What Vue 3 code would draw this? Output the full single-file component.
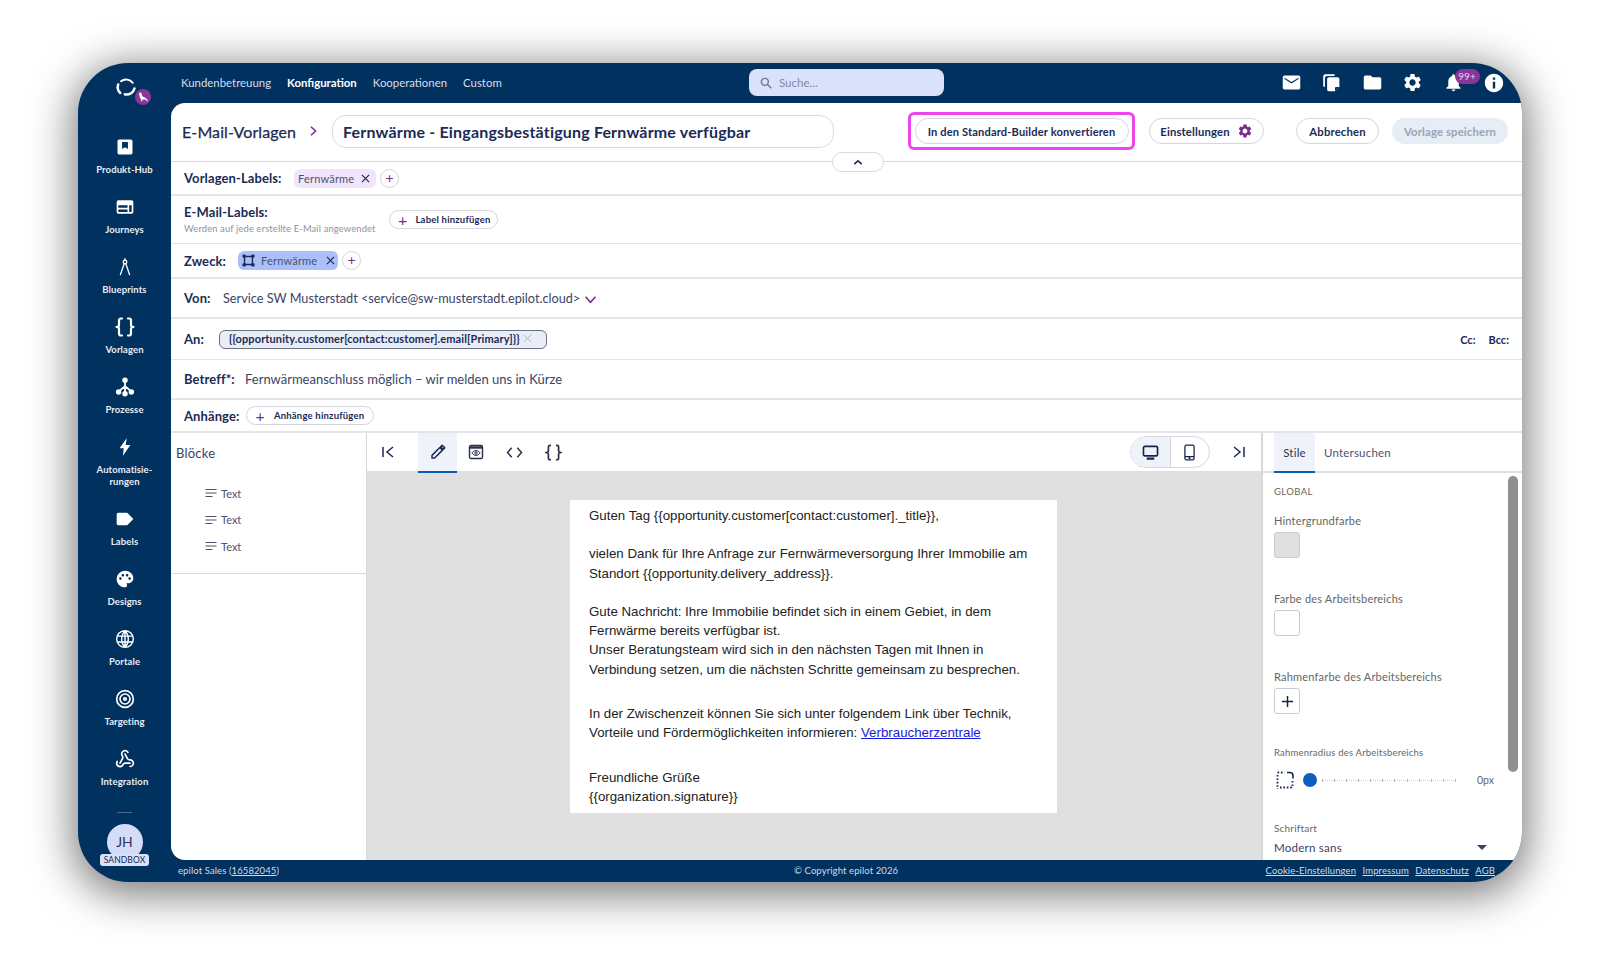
<script setup>
// sidebar entries: d is a single path, stroke = outline style icon
const sideItems = [
  { label: 'Produkt-Hub', d: 'M5 3h14a2 2 0 0 1 2 2v14a2 2 0 0 1-2 2H5a2 2 0 0 1-2-2V5a2 2 0 0 1 2-2zm3.5 3v8.500l3.500-2.200 3.500 2.200V6z' },
  { label: 'Journeys', d: 'M4 4h16a2 2 0 0 1 2 2v12a2 2 0 0 1-2 2H4a2 2 0 0 1-2-2V6a2 2 0 0 1 2-2zm0 6v3h11v-3zm0 5v3h11v-3zm13-5v8h3v-8z' },
  { label: 'Blueprints', stroke: true, sw: 1.7, vb: '-1 -1 26 26', d: 'M12 1v2M9.700 5.500a2.300 2.300 0 1 0 4.600 0a2.300 2.300 0 1 0-4.600 0zM10.800 8L6 22M13.200 8L18 22' },
  { label: 'Vorlagen', stroke: true, sw: 2.2, vb: '2 2 20 20', d: 'M9 3.500H8a2 2 0 0 0-2 2V10a2 2 0 0 1-2.500 2A2 2 0 0 1 6 14v4.500a2 2 0 0 0 2 2h1M15 3.500h1a2 2 0 0 1 2 2V10a2 2 0 0 0 2.500 2a2 2 0 0 0-2.500 2v4.500a2 2 0 0 1-2 2h-1' },
  { label: 'Prozesse', stroke: true, fill: true, vb: '1 1 22 22', d: 'M12 5v14M12 11L5 17M12 11l7 6M10 4.500a2 2 0 1 0 4 0a2 2 0 1 0-4 0zM10 19.500a2 2 0 1 0 4 0a2 2 0 1 0-4 0zM3 17.500a2 2 0 1 0 4 0a2 2 0 1 0-4 0zM17 17.500a2 2 0 1 0 4 0a2 2 0 1 0-4 0z' },
  { label: 'Automatisie-\nrungen', d: 'M14 1.500L5.500 13.500h5L9.500 22.500l9-13h-5.500z' },
  { label: 'Labels', d: 'M15.630 5.300C15.270 4.800 14.670 4.500 14 4.500H4C2.900 4.500 2 5.400 2 6.500v11c0 1.100.9 2 2 2h10c.67 0 1.270-.33 1.630-.84L22 12z' },
  { label: 'Designs', d: 'M12 2C6.490 2 2 6.490 2 12s4.490 10 10 10c1.380 0 2.500-1.120 2.500-2.500 0-.61-.23-1.200-.64-1.670-.08-.1-.13-.21-.13-.33 0-.28.22-.5.5-.5H16c3.310 0 6-2.690 6-6 0-4.960-4.490-9-10-9zm5.500 11c-.83 0-1.500-.67-1.500-1.500s.67-1.500 1.500-1.500 1.500.67 1.500 1.500-.67 1.500-1.500 1.500zm-3-4c-.83 0-1.500-.67-1.500-1.500S13.670 6 14.500 6s1.500.67 1.500 1.500S15.330 9 14.500 9zM5 11.500c0-.83.67-1.500 1.500-1.500S8 10.670 8 11.500 7.330 13 6.500 13 5 12.330 5 11.500zm6-4c0 .83-.67 1.500-1.500 1.500S8 8.330 8 7.500 8.670 6 9.500 6s1.500.67 1.500 1.500z' },
  { label: 'Portale', stroke: true, sw: 1.7, d: 'M2 12a10 10 0 1 0 20 0a10 10 0 1 0-20 0zM2.500 8.500h19M2.500 15.500h19M12 2c-5.300 5.600-5.300 14.400 0 20M12 2c5.300 5.600 5.300 14.400 0 20M12 2v20' },
  { label: 'Targeting', stroke: true, d: 'M2 12a10 10 0 1 0 20 0a10 10 0 1 0-20 0zM6 12a6 6 0 1 0 12 0a6 6 0 1 0-12 0zM10.500 12a1.500 1.500 0 1 0 3 0a1.500 1.500 0 1 0-3 0z' },
  { label: 'Integration', stroke: true, d: 'M18 16.980h-5.990c-1.100 0-1.950.94-2.480 1.900A4 4 0 0 1 2 17c.01-.7.2-1.400.57-2M6 17l3.130-5.780c.53-.97.1-2.180-.5-3.100a4 4 0 1 1 6.890-4.060M12 6l3.130 5.730C15.660 12.700 16.900 13 18 13a4 4 0 0 1 0 8' },
]

const gearPath = 'M19.140 12.940c.04-.3.06-.61.06-.94 0-.32-.02-.64-.07-.94l2.030-1.580c.18-.14.23-.41.12-.61l-1.920-3.320c-.12-.22-.37-.29-.59-.22l-2.390.96c-.5-.38-1.030-.7-1.620-.94l-.36-2.540c-.04-.24-.24-.41-.48-.41h-3.840c-.24 0-.43.17-.47.41l-.36 2.540c-.59.24-1.130.57-1.620.94l-2.390-.96c-.22-.08-.47 0-.59.22L2.740 8.870c-.12.21-.08.47.12.61l2.030 1.580c-.05.3-.09.63-.09.94s.02.64.07.94l-2.030 1.580c-.18.14-.23.41-.12.61l1.920 3.320c.12.22.37.29.59.22l2.390-.96c.5.38 1.030.7 1.620.94l.36 2.540c.05.24.24.41.48.41h3.840c.24 0 .44-.17.47-.41l.36-2.540c.59-.24 1.130-.56 1.620-.94l2.390.96c.22.08.47 0 .59-.22l1.920-3.320c.12-.22.07-.47-.12-.61l-2.010-1.580zM12 15.600c-1.980 0-3.600-1.620-3.600-3.600s1.620-3.600 3.600-3.600 3.600 1.620 3.600 3.600-1.620 3.600-3.600 3.600z'

const blocks = ['Text', 'Text', 'Text']
const sliderTicks = Array.from({ length: 12 })
</script>

<template>
  <div class="stage">
    <div class="frame">
      <div class="body">
        <aside class="sidebar">
          <div class="logo">
            <svg viewBox="0 0 24 24" width="24" height="24" fill="none" stroke="#fff" stroke-linecap="round">
              <path d="M8 6.300A8.500 8.500 0 0 1 19.800 7.800" stroke-width="1.900" />
              <path d="M21.500 13.500A8 8 0 0 1 11.800 19.300" stroke-width="2.500" />
              <path d="M7.300 18A8 8 0 0 1 5.200 9.500" stroke-width="2.500" />
            </svg>
            <span class="logo-badge">
              <svg viewBox="0 0 16 16" width="13" height="13" fill="#fff"><path d="M4 2.500a1.500 1.500 0 0 1 2.800.5l1 3.500L12 8.500l2.500 3v1h-1.200L12 10.500H8.500L7 13H5.800l1-2.200C5 10 3.800 5.500 4 2.500z" /></svg>
            </span>
          </div>
          <nav class="side-nav">
            <a v-for="item in sideItems" :key="item.label" class="side-item">
              <svg
                :viewBox="item.vb || '0 0 24 24'"
                width="20"
                height="20"
                fill-rule="evenodd"
                :fill="item.stroke && !item.fill ? 'none' : '#fff'"
                :stroke="item.stroke ? '#fff' : 'none'"
                :stroke-width="item.stroke ? (item.sw || 2) : 0"
                stroke-linecap="round"
                stroke-linejoin="round"
              ><path :d="item.d" /></svg>
              <span class="side-label">{{ item.label }}</span>
            </a>
          </nav>
          <div class="side-rule"></div>
          <div class="avatar">
            JH
            <span class="sandbox">SANDBOX</span>
          </div>
        </aside>

        <div class="main">
          <header class="topbar">
            <nav class="topnav">
              <a>Kundenbetreuung</a>
              <a class="on">Konfiguration</a>
              <a>Kooperationen</a>
              <a>Custom</a>
            </nav>
            <div class="search">
              <svg viewBox="0 0 24 24" width="14" height="14" fill="none" stroke="#6d7691" stroke-width="2.400"><circle cx="10" cy="10" r="6" /><path d="M15 15l6 6" /></svg>
              <span>Suche...</span>
            </div>
            <div class="top-icons">
              <svg viewBox="0 0 24 24" width="21" height="21" fill="#fff"><path d="M20 4H4c-1.100 0-2 .9-2 2v12c0 1.100.9 2 2 2h16c1.100 0 2-.9 2-2V6c0-1.100-.9-2-2-2zm0 4l-8 5-8-5V6.500l8 5 8-5z" fill-rule="evenodd" /></svg>
              <svg viewBox="0 0 24 24" width="21" height="21" fill="#fff"><path d="M9 6h10a2 2 0 0 1 2 2v9l-5 5H9a2 2 0 0 1-2-2V8a2 2 0 0 1 2-2zM5 2.500h10.500v2H7a2.500 2.500 0 0 0-2.500 2.500V17H4a1.500 1.500 0 0 1-1.500-1.500V5a2.500 2.500 0 0 1 2.500-2.500z" /><path d="M16 22v-4a1 1 0 0 1 1-1h4z" fill="#00315f" /></svg>
              <svg viewBox="0 0 24 24" width="21" height="21" fill="#fff"><path d="M10 4H4c-1.100 0-1.990.9-1.990 2L2 18c0 1.100.9 2 2 2h16c1.100 0 2-.9 2-2V8c0-1.100-.9-2-2-2h-8l-2-2z" /></svg>
              <svg viewBox="0 0 24 24" width="21" height="21" fill="#fff"><path :d="gearPath" fill-rule="evenodd" /></svg>
              <span class="bell">
                <svg viewBox="0 0 24 24" width="21" height="21" fill="#fff"><path d="M12 22c1.100 0 2-.9 2-2h-4c0 1.100.89 2 2 2zm6-6v-5c0-3.070-1.640-5.640-4.500-6.320V4c0-.83-.67-1.500-1.500-1.500s-1.500.67-1.500 1.500v.68C7.630 5.360 6 7.920 6 11v5l-2 2v1h16v-1l-2-2z" /></svg>
                <span class="bell-badge">99+</span>
              </span>
              <svg class="info" viewBox="0 0 24 24" width="22" height="22" fill="#fff"><path d="M12 2C6.480 2 2 6.480 2 12s4.480 10 10 10 10-4.480 10-10S17.520 2 12 2zm1.300 16h-2.600v-7.500h2.600zm0-9.500h-2.600V6h2.600z" fill-rule="evenodd" /></svg>
            </div>
          </header>

          <section class="panel">
            <div class="head">
              <span class="crumb">E-Mail-Vorlagen</span>
              <svg class="crumb-arrow" viewBox="0 0 10 14" width="9" height="12" fill="none" stroke="#7b2d8e" stroke-width="1.800"><path d="M2 2l5.500 5L2 12" /></svg>
              <div class="name">Fernwärme - Eingangsbestätigung Fernwärme verfügbar</div>
              <div class="highlight">
                <button class="btn">In den Standard-Builder konvertieren</button>
              </div>
              <button class="btn settings">
                Einstellungen
                <svg viewBox="0 0 24 24" width="16" height="16" fill="#7b2d8e"><path :d="gearPath" fill-rule="evenodd" /></svg>
              </button>
              <button class="btn cancel">Abbrechen</button>
              <button class="btn save">Vorlage speichern</button>
              <span class="collapse">
                <svg viewBox="0 0 12 8" width="10" height="7" fill="none" stroke="#1c2a55" stroke-width="1.800"><path d="M1.500 6L6 2l4.500 4" /></svg>
              </span>
            </div>

            <div class="row r-labels">
              <span class="lbl">Vorlagen-Labels:</span>
              <span class="chip lilac">Fernwärme
                <svg class="x" viewBox="0 0 10 10" width="9" height="9" stroke="#1c2a55" stroke-width="1.300"><path d="M1 1l8 8M9 1l-8 8" /></svg>
              </span>
              <span class="plus">+</span>
            </div>
            <div class="row r-mail">
              <div class="lbl-stack">
                <span class="lbl">E-Mail-Labels:</span>
                <small>Werden auf jede erstellte E-Mail angewendet</small>
              </div>
              <button class="add add-label"><b>+</b>Label hinzufügen</button>
            </div>
            <div class="row r-zweck">
              <span class="lbl">Zweck:</span>
              <span class="chip blue">
                <svg viewBox="0 0 14 14" width="13" height="13" fill="#1c2a55"><path d="M2 2h10v1.500H2zM2 10.500h10V12H2zM2 2h1.500v10H2zM10.500 2H12v10h-1.500z" /><rect x="0.500" y="0.500" width="3.500" height="3.500" rx="1" /><rect x="10" y="0.500" width="3.500" height="3.500" rx="1" /><rect x="0.500" y="10" width="3.500" height="3.500" rx="1" /><rect x="10" y="10" width="3.500" height="3.500" rx="1" /></svg>
                Fernwärme
                <svg class="x" viewBox="0 0 10 10" width="9" height="9" stroke="#1c2a55" stroke-width="1.300"><path d="M1 1l8 8M9 1l-8 8" /></svg>
              </span>
              <span class="plus">+</span>
            </div>
            <div class="row r-von">
              <span class="lbl">Von:</span>
              <span class="val">Service SW Musterstadt &lt;service@sw-musterstadt.epilot.cloud&gt;</span>
              <svg class="von-arrow" viewBox="0 0 14 10" width="13" height="9" fill="none" stroke="#7b2d8e" stroke-width="1.800"><path d="M1.500 2L7 8l5.500-6" /></svg>
            </div>
            <div class="row r-an">
              <span class="lbl">An:</span>
              <span class="token">{{ '{' }}{{ '{' }}opportunity.customer[contact:customer].email[Primary]{{ '}' }}{{ '}' }}
                <svg viewBox="0 0 10 10" width="9" height="9" stroke="#a9adba" stroke-width="1"><path d="M1 1l8 8M9 1l-8 8" /></svg>
              </span>
              <span class="cc cc-first">Cc:</span>
              <span class="cc">Bcc:</span>
            </div>
            <div class="row r-betreff">
              <span class="lbl">Betreff*:</span>
              <span class="val">Fernwärmeanschluss möglich – wir melden uns in Kürze</span>
            </div>
            <div class="row r-att">
              <span class="lbl">Anhänge:</span>
              <button class="add add-att"><b>+</b>Anhänge hinzufügen</button>
            </div>

            <div class="editor">
              <div class="blocks">
                <div class="blocks-top">
                  <h4>Blöcke</h4>
                  <ul>
                    <li v-for="(b, i) in blocks" :key="i">
                      <svg viewBox="0 0 12 10" width="12" height="10" stroke="#4a5270" stroke-width="1.100"><path d="M0.500 1.500h11M0.500 5h11M0.500 8.500h7" /></svg>
                      {{ b }}
                    </li>
                  </ul>
                </div>
              </div>

              <div class="center">
                <div class="toolbar">
                  <svg class="tool first" viewBox="0 0 16 16" width="16" height="16" fill="none" stroke="#1c2a55" stroke-width="1.500"><path d="M3 3v10M13 3L7 8l6 5" /></svg>
                  <span class="tool-on">
                    <svg viewBox="0 0 24 24" width="18" height="18" fill="none" stroke="#1c2a55" stroke-width="2" stroke-linejoin="round"><path d="M4 16.500V20h3.500L18 9.500 14.500 6zM15.500 5l2-2 3.500 3.500-2 2z" /></svg>
                  </span>
                  <span class="tool-cell">
                    <svg viewBox="0 0 16 16" width="16" height="16" fill="none" stroke="#2a2f45"><rect x="1.500" y="1.500" width="13" height="13" rx="1.500" stroke-width="1.400" /><path d="M1.500 3.500h13" stroke-width="2.400" /><path d="M3.800 9c2.600-3.200 5.800-3.200 8.400 0c-2.600 3.200-5.800 3.200-8.400 0z" /><circle cx="8" cy="9" r="1.200" /></svg>
                  </span>
                  <span class="tool-cell">
                    <svg viewBox="0 0 18 14" width="17" height="13" fill="none" stroke="#2a2f45" stroke-width="1.600"><path d="M6 2L1.500 7 6 12M12 2l4.500 5-4.500 5" /></svg>
                  </span>
                  <span class="tool-cell">
                    <svg viewBox="2 2 20 20" width="17" height="17" fill="none" stroke="#2a2f45" stroke-width="2"><path d="M9 3.500H8a2 2 0 0 0-2 2V10a2 2 0 0 1-2.500 2A2 2 0 0 1 6 14v4.500a2 2 0 0 0 2 2h1M15 3.500h1a2 2 0 0 1 2 2V10a2 2 0 0 0 2.500 2a2 2 0 0 0-2.500 2v4.500a2 2 0 0 1-2 2h-1" /></svg>
                  </span>
                  <div class="devices">
                    <span class="dev on">
                      <svg viewBox="0 0 18 16" width="17" height="15" fill="none" stroke="#14264f" stroke-width="1.800"><rect x="1.500" y="1.500" width="15" height="10" rx="1.500" /><path d="M5 14.500h8" stroke-width="2.400" /></svg>
                    </span>
                    <span class="dev">
                      <svg viewBox="0 0 12 18" width="11" height="17" fill="none" stroke="#14264f" stroke-width="1.400"><rect x="1" y="1" width="10" height="16" rx="1.800" /><path d="M1 13.500h10" /><circle cx="6" cy="15.200" r="0.500" /></svg>
                    </span>
                  </div>
                  <svg class="tool last" viewBox="0 0 16 16" width="16" height="16" fill="none" stroke="#1c2a55" stroke-width="1.500"><path d="M13 3v10M3 3l6 5-6 5" /></svg>
                </div>
                <div class="canvas">
                  <article class="mail">
                    <p>Guten Tag {{ '{' }}{{ '{' }}opportunity.customer[contact:customer]._title{{ '}' }}{{ '}' }},</p>
                    <p class="gap">vielen Dank für Ihre Anfrage zur Fernwärmeversorgung Ihrer Immobilie am<br>Standort {{ '{' }}{{ '{' }}opportunity.delivery_address{{ '}' }}{{ '}' }}.</p>
                    <p class="gap">Gute Nachricht: Ihre Immobilie befindet sich in einem Gebiet, in dem<br>Fernwärme bereits verfügbar ist.<br>Unser Beratungsteam wird sich in den nächsten Tagen mit Ihnen in<br>Verbindung setzen, um die nächsten Schritte gemeinsam zu besprechen.</p>
                    <p class="gap wide">In der Zwischenzeit können Sie sich unter folgendem Link über Technik,<br>Vorteile und Fördermöglichkeiten informieren: <a>Verbraucherzentrale</a></p>
                    <p class="gap wide">Freundliche Grüße<br>{{ '{' }}{{ '{' }}organization.signature{{ '}' }}{{ '}' }}</p>
                  </article>
                </div>
              </div>

              <aside class="props">
                <div class="tabs">
                  <span class="tab on">Stile</span>
                  <span class="tab">Untersuchen</span>
                </div>
                <div class="props-body">
                  <div class="scrollbar"></div>
                  <div class="global">GLOBAL</div>
                  <div class="prop-label first">Hintergrundfarbe</div>
                  <div class="swatch grey"></div>
                  <div class="prop-label">Farbe des Arbeitsbereichs</div>
                  <div class="swatch"></div>
                  <div class="prop-label">Rahmenfarbe des Arbeitsbereichs</div>
                  <div class="swatch add-swatch">
                    <svg viewBox="0 0 14 14" width="13" height="13" stroke="#14264f" stroke-width="1.600"><path d="M7 1v12M1 7h12" /></svg>
                  </div>
                  <div class="prop-label small">Rahmenradius des Arbeitsbereichs</div>
                  <div class="slider-row">
                    <svg class="radius-icon" viewBox="0 0 18 18" width="18" height="18" fill="none" stroke="#14264f"><path d="M11 1.500h3a3 3 0 0 1 3 3v3" stroke-width="1.600" /><path d="M1.500 1.500h7M1.500 4v14M4 16.500h13M16.500 10v7" stroke-width="1.800" stroke-dasharray="1.600 1.800" /></svg>
                    <span class="knob"></span>
                    <span class="track"><i v-for="(t, i) in sliderTicks" :key="i"></i></span>
                    <span class="px">0px</span>
                  </div>
                  <div class="prop-label font">Schriftart</div>
                  <div class="select">
                    <span>Modern sans</span>
                    <i class="caret"></i>
                  </div>
                </div>
              </aside>
            </div>
          </section>
        </div>
      </div>

      <footer class="foot">
        <span class="foot-left">epilot Sales (<u>16582045</u>)</span>
        <span class="foot-mid">© Copyright epilot 2026</span>
        <span class="foot-right"><u>Cookie-Einstellungen</u><u>Impressum</u><u>Datenschutz</u><u>AGB</u></span>
      </footer>
    </div>
  </div>
</template>

<style>
html, body { margin: 0; background: #fff; }
</style>

<style scoped>
.stage {
  width: 1600px;
  height: 957px;
  padding: 63px 78px 75px;
  box-sizing: border-box;
  overflow: hidden;
  font-family: "Lato", "Liberation Sans", sans-serif;
  color: #1c2a55;
}
.frame {
  height: 819px;
  background: #00315f;
  border-radius: 50px;
  box-shadow: 0 8px 42px 6px rgba(0, 0, 0, 0.5);
  display: flex;
  flex-direction: column;
  overflow: hidden;
}
.body { flex: 1; display: flex; min-height: 0; }

/* sidebar */
.sidebar {
  width: 93px;
  flex-shrink: 0;
  display: flex;
  flex-direction: column;
  align-items: center;
  color: #fff;
}
.logo { height: 24px; margin-top: 12px; position: relative; width: 24px; }
.logo svg { display: block; }
.logo-badge {
  position: absolute;
  left: 22px;
  top: 14px;
  width: 16px;
  height: 16px;
  border-radius: 50%;
  background: #8b359b;
  display: flex;
  align-items: center;
  justify-content: center;
}
.side-nav { display: flex; flex-direction: column; margin-top: 38px; }
.side-item {
  display: flex;
  flex-direction: column;
  align-items: center;
  min-height: 60px;
  gap: 6.500px;
}
.side-item svg { display: block; }
.side-label {
  font-size: 9.500px;
  font-weight: 700;
  line-height: 12px;
  letter-spacing: 0.1px;
  color: #e8edf5;
  white-space: pre-line;
  text-align: center;
}
.side-item:nth-child(6) { min-height: 72px; }
.side-rule { width: 15px; height: 3px; background: #4f6a8e; margin-top: 3px; border-radius: 2px; }
.avatar {
  position: relative;
  width: 36px;
  height: 36px;
  margin-top: 11px;
  border-radius: 50%;
  background: #d4dcf8;
  color: #2b3558;
  font-size: 14px;
  text-align: center;
  line-height: 36px;
}
.sandbox {
  position: absolute;
  left: -6.500px;
  top: 30px;
  width: 49px;
  height: 12px;
  background: #d9e1fb;
  border-radius: 3px;
  font-size: 8.500px;
  line-height: 12px;
  letter-spacing: 0.1px;
  color: #14264f;
}

/* top bar */
.main { flex: 1; min-width: 0; display: flex; flex-direction: column; }
.topbar { height: 40px; flex-shrink: 0; display: flex; align-items: center; position: relative; box-sizing: border-box; padding-bottom: 1px; }
.topnav { display: flex; gap: 16px; padding-left: 10px; font-size: 11.400px; color: #d6deeb; }
.topnav .on { color: #fff; font-weight: 700; }
.search {
  position: absolute;
  left: 578px;
  top: 6px;
  width: 195px;
  height: 27px;
  border-radius: 8px;
  background: #d9e1fb;
  display: flex;
  align-items: center;
  gap: 6px;
  padding-left: 10px;
  box-sizing: border-box;
  font-size: 11.500px;
  color: #828aa4;
}
.top-icons { margin-left: auto; display: flex; align-items: center; gap: 19.500px; padding-right: 17px; }
.bell { position: relative; display: flex; }
.bell-badge {
  position: absolute;
  left: 12px;
  top: -3px;
  width: 25px;
  height: 15px;
  border-radius: 8px;
  background: #8b359b;
  color: #e7d6ee;
  font-size: 10px;
  line-height: 15px;
  text-align: center;
}

/* white panel */
.panel {
  flex: 1;
  min-height: 0;
  background: #fff;
  border-radius: 14px 0 0 14px;
  display: flex;
  flex-direction: column;
  overflow: hidden;
  position: relative;
}
.head {
  height: 59px;
  flex-shrink: 0;
  display: flex;
  align-items: center;
  padding: 0 14px 2px 11px;
  border-bottom: 1px solid #d6d9dd;
  box-sizing: border-box;
}
.crumb { font-size: 16px; font-weight: 400; -webkit-text-stroke: 0.25px #1c2a55; width: 127px; letter-spacing: 0.1px; flex-shrink: 0; }
.crumb-arrow { margin-right: 14px; flex-shrink: 0; }
.name {
  width: 502px;
  height: 33px;
  box-sizing: border-box;
  border: 1px solid #d8dbe0;
  border-radius: 14px;
  font-size: 16px;
  font-weight: 700;
  line-height: 31px;
  padding-left: 10px;
  letter-spacing: 0.18px;
  flex-shrink: 0;
  margin-right: 74px;
}
.highlight {
  width: 227px;
  height: 38px;
  box-sizing: border-box;
  border: 3px solid #ec45ee;
  border-radius: 6px;
  display: flex;
  align-items: center;
  justify-content: center;
  margin-right: 14px;
  flex-shrink: 0;
}
.btn {
  height: 26px;
  padding: 0;
  border: 1px solid #d3d6dc;
  border-radius: 13px;
  background: #fff;
  color: #1c2a55;
  font: 700 11.300px "Lato", "Liberation Sans", sans-serif;
  letter-spacing: 0.15px;
  display: flex;
  align-items: center;
  justify-content: center;
  flex-shrink: 0;
}
.highlight .btn { width: 214px; font-size: 11.100px; }
.settings { width: 115px; gap: 7px; margin-right: 32px; }
.cancel { width: 83px; margin-right: 13px; }
.save { width: 116px; border: 0; background: #e7edf5; color: #9aa3b5; }
.collapse {
  position: absolute;
  left: 661px;
  top: 49px;
  width: 52px;
  height: 20px;
  border: 1px solid #d8dbe0;
  border-radius: 10px;
  background: #fff;
  box-sizing: border-box;
  display: flex;
  align-items: center;
  justify-content: center;
}

.row {
  flex-shrink: 0;
  display: flex;
  align-items: center;
  padding-left: 13px;
  border-bottom: 2px solid #e3e5e8;
  box-sizing: border-box;
  font-size: 13px;
}
.lbl { font-weight: 700; font-size: 13px; color: #1c2a55; letter-spacing: 0.1px; }
.val { font-size: 13px; color: #3a4466; }
.r-labels { height: 34px; }
.r-labels .lbl { width: 110px; }
.r-mail { height: 48px; border-bottom-width: 1px; }
.r-zweck { height: 35px; }
.r-zweck .lbl { width: 54px; }
.r-von { height: 40px; }
.r-von .lbl { width: 39px; }
.r-von .val { font-size: 12.700px; white-space: nowrap; }
.r-an { height: 41px; padding-right: 13px; border-bottom-width: 1px; }
.r-an .lbl { width: 35px; }
.r-betreff { height: 40px; }
.r-betreff .lbl { width: 61px; }
.r-att { height: 33px; }
.lbl-stack { display: flex; flex-direction: column; width: 205px; gap: 1px; margin-top: -2px; }
.lbl-stack small { font-size: 9.350px; color: #8d93a1; letter-spacing: 0.15px; white-space: nowrap; padding-top: 2px; }
.chip {
  height: 19px;
  border-radius: 6px;
  display: inline-flex;
  align-items: center;
  font-size: 11px;
  color: #4a5270;
  padding-left: 4px;
  box-sizing: border-box;
  letter-spacing: 0.2px;
}
.chip.lilac { width: 82px; background: #f0e5fa; }
.chip.blue { width: 100px; background: #abc0f8; gap: 6px; padding-left: 4px; }
.chip.blue .x { margin-left: 3px; }
.x { margin-left: 7px; flex-shrink: 0; }
.plus {
  width: 19px;
  height: 19px;
  margin-left: 4px;
  box-sizing: border-box;
  border: 1px solid #d3d6dc;
  border-radius: 50%;
  color: #7b2d8e;
  font-size: 14px;
  line-height: 16px;
  text-align: center;
}
.add {
  height: 19px;
  padding: 0;
  border: 1px solid #d3d6dc;
  border-radius: 10px;
  background: #fff;
  color: #1c2a55;
  font: 700 9.500px "Lato", "Liberation Sans", sans-serif;
  letter-spacing: 0.2px;
  display: flex;
  align-items: center;
  gap: 8px;
  padding-left: 8px;
  box-sizing: border-box;
}
.add b { color: #7b2d8e; font-size: 16px; font-weight: 400; line-height: 1; }
.add-label { width: 109px; }
.add-att { width: 128px; margin-left: 7px; gap: 9px; }
.von-arrow { margin-left: 4px; margin-top: 3px; }
.token {
  width: 328px;
  height: 19px;
  box-sizing: border-box;
  border: 1.500px solid #6b7082;
  border-radius: 6px;
  background: #e9edf8;
  font-size: 11px;
  font-weight: 700;
  line-height: 16px;
  padding-left: 9px;
  color: #1c2a55;
  letter-spacing: 0.1px;
  white-space: nowrap;
}
.cc { font-size: 11px; font-weight: 700; margin-left: 13px; }
.cc-first { margin-left: auto; }

/* editor */
.editor { flex: 1; min-height: 0; display: flex; }
.blocks { width: 196px; flex-shrink: 0; border-right: 1px solid #d5d7da; box-sizing: border-box; }
.blocks-top { height: 140px; border-bottom: 1px solid #d9dbde; }
.blocks h4 { margin: 0; font-size: 13px; font-weight: 400; padding: 13px 0 0 5px; line-height: 15px; color: #3a4466; letter-spacing: 0.2px; }
.blocks ul { list-style: none; margin: 19px 0 0; padding: 0 0 0 34px; }
.blocks li { height: 26.500px; display: flex; align-items: center; gap: 4px; font-size: 11px; color: #4a5270; }
.center { flex: 1; min-width: 0; display: flex; flex-direction: column; }
.toolbar {
  height: 40px;
  flex-shrink: 0;
  box-sizing: border-box;
  display: flex;
  align-items: center;
  border-bottom: 2px solid #dedfe1;
  padding-left: 13px;
}
.tool.first { margin-right: 22px; }
.tool-on {
  width: 39px;
  height: 40px;
  background: #eff3f9;
  border-bottom: 2px solid #0a5cb0;
  box-sizing: border-box;
  display: flex;
  align-items: center;
  justify-content: center;
  align-self: flex-start;
}
.tool-cell { width: 38.500px; display: flex; justify-content: center; }
.devices {
  margin-left: auto;
  width: 80px;
  height: 32px;
  box-sizing: border-box;
  border: 1px solid #d5d9de;
  border-radius: 16px;
  display: flex;
  overflow: hidden;
}
.dev { flex: 1; display: flex; align-items: center; justify-content: center; }
.dev.on { background: #eff3f9; border-right: 1px solid #d5d9de; }
.tool.last { margin: 0 14px 0 21px; }
.canvas {
  flex: 1;
  min-height: 0;
  background: #e0e0e0;
  display: flex;
  justify-content: center;
  padding-top: 27px;
  padding-right: 1px;
}
.mail {
  width: 487px;
  height: 313px;
  box-sizing: border-box;
  background: #fff;
  padding: 6px 19px;
  font: 13.300px/19.200px "Liberation Sans", Arial, sans-serif;
  color: #222;
}
.mail p { margin: 0; white-space: nowrap; }
.mail .gap { margin-top: 19.200px; }
.mail .gap.wide { margin-top: 25.200px; }
.mail a { color: #1a1ad8; text-decoration: underline; }

/* right panel */
.props { width: 261px; flex-shrink: 0; border-left: 2px solid #d5d7da; box-sizing: border-box; display: flex; flex-direction: column; }
.tabs { height: 40px; flex-shrink: 0; box-sizing: border-box; border-bottom: 2px solid #dedfe1; padding-left: 11px; display: flex; font-size: 11.500px; color: #4a5270; }
.tab { display: flex; align-items: center; padding: 0 9px; letter-spacing: 0.2px; }
.tab.on { width: 41px; padding: 0; justify-content: center; background: #eff3f9; border-bottom: 2px solid #0a5cb0; height: 40px; box-sizing: border-box; color: #2a3556; }
.props-body { position: relative; flex: 1; min-height: 0; padding: 13px 0 0 11px; overflow: hidden; }
.scrollbar { position: absolute; right: 4px; top: 3px; width: 10px; height: 296px; border-radius: 5px; background: #909090; }
.global { font-size: 9.500px; color: #666; letter-spacing: 0.4px; line-height: 12px; }
.prop-label { font-size: 11px; line-height: 14px; color: #666; letter-spacing: 0.2px; margin-top: 34px; }
.prop-label.first { margin-top: 16px; }
.prop-label.small { font-size: 9.500px; margin-top: 32px; }
.prop-label.font { font-size: 10px; margin-top: 32px; }
.swatch {
  width: 26px;
  height: 26px;
  margin-top: 4px;
  box-sizing: border-box;
  border: 1px solid #c4ccd6;
  border-radius: 3px;
  background: #fff;
}
.swatch.grey { background: #e0e0e0; }
.add-swatch { display: flex; align-items: center; justify-content: center; }
.slider-row { display: flex; align-items: center; margin-top: 11px; width: 220px; position: relative; height: 18px; }
.radius-icon { margin-left: 2px; flex-shrink: 0; }
.knob { width: 14px; height: 14px; border-radius: 50%; background: #0a5fc0; margin-left: 9px; flex-shrink: 0; }
.track { flex: 1; display: flex; justify-content: space-between; margin: 0 21px 0 5px; border-top: 1px dotted #d0d0d0; height: 0; }
.track i { width: 1px; height: 3px; margin-top: -2px; background: #bbb; }
.px { font-size: 10.500px; color: #666; flex-shrink: 0; }
.select { display: flex; align-items: center; justify-content: space-between; width: 216px; font-size: 11.600px; margin-top: 6px; color: #3a4466; letter-spacing: 0.2px; }
.caret { width: 0; height: 0; border: 5px solid transparent; border-top: 5px solid #3a4466; border-bottom: 0; margin-right: 3px; }

/* footer */
.foot {
  height: 22px;
  flex-shrink: 0;
  box-sizing: border-box;
  padding-bottom: 1px;
  position: relative;
  display: flex;
  align-items: center;
  font-size: 9.500px;
  color: #d3dbe8;
  letter-spacing: 0.1px;
}
.foot-left { margin-left: 100px; }
.foot-mid { position: absolute; left: 716px; }
.foot-right { margin-left: auto; margin-right: 27px; display: flex; gap: 6.500px; }
</style>
